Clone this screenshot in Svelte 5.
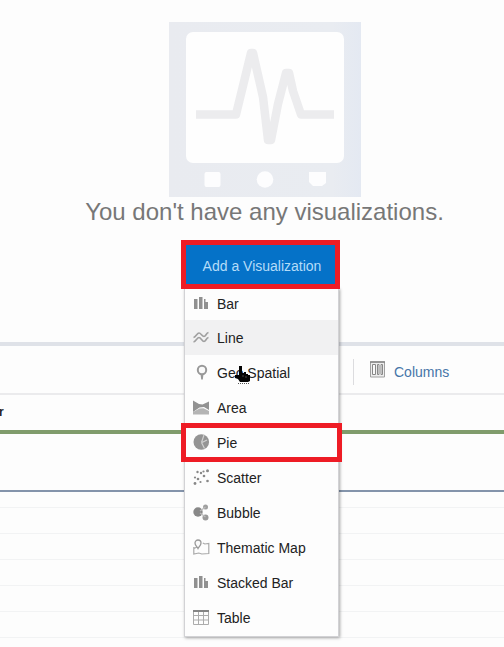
<script>
  const items = [
    { label: 'Bar', icon: 'bar' },
    { label: 'Line', icon: 'line' },
    { label: 'Geo Spatial', icon: 'pin' },
    { label: 'Area', icon: 'area' },
    { label: 'Pie', icon: 'pie' },
    { label: 'Scatter', icon: 'scatter' },
    { label: 'Bubble', icon: 'bubble' },
    { label: 'Thematic Map', icon: 'map' },
    { label: 'Stacked Bar', icon: 'bar' },
    { label: 'Table', icon: 'table' }
  ];
  const rows = [0, 1, 2, 3, 4, 5];
</script>

<div class="page">
  <section class="empty">
    <svg class="monitor" viewBox="0 0 192 175">
      <defs>
        <linearGradient id="frame" x1="0" x2="1">
          <stop offset="0" stop-color="#e9ebf0" />
          <stop offset="0.85" stop-color="#e9ecf1" />
          <stop offset="1" stop-color="#e4e9f2" />
        </linearGradient>
      </defs>
      <rect width="192" height="175" fill="url(#frame)" />
      <rect x="17" y="10" width="158" height="131" rx="7" fill="#fefefe" />
      <path d="M27 92.500H67L72 72 82 31 84 31 94 75 99 118 102 118 109 82 117 51 120 51 124 69 132 92.500H165" fill="none" stroke="#ececee" stroke-width="8.500" stroke-linejoin="round" />
      <rect x="35.500" y="150" width="16" height="15" rx="2" fill="#fdfdfe" />
      <circle cx="96" cy="157.500" r="8.300" fill="#fdfdfe" />
      <path d="M140 150h17v11l-4 3h-9l-4-4z" fill="#fdfdfe" />
    </svg>
    <h1>You don't have any visualizations.</h1>
  </section>

  <section class="grid">
    <div class="toolbar">
      <div class="columns">
        <svg width="15" height="17" viewBox="0 0 15 17">
          <path d="M.5 1h14v15H.5z" fill="#eee" stroke="#a0a0a0" />
          <path d="M0 1h15" stroke="#858585" stroke-width="1.500" />
          <path d="M2.500 3.500h3v10h-3zM7.500 3.500h1.500v10H7.500zM11 3.500h1.500v10H11z" fill="#fafafa" stroke="#888" />
        </svg>
        <span>Columns</span>
      </div>
    </div>
    <div class="header">r</div>
    <div class="first"></div>
    <div class="rows">
      {#each rows as row (row)}<div class="row"></div>{/each}
    </div>
  </section>

  <div class="dropdown">
    <button>Add a Visualization</button>
    <div class="menu">
      {#each items as item (item.label)}
        <div class="item" class:hover={item.label === 'Line'}>
          <svg width="17" height="17" viewBox="0 0 17 17">
            {#if item.icon === 'bar'}
              <path d="M1 4h3.500v10H1zM6 2h3.500v12H6zM11 4h1.500v10H11zM12.500 7h2.500v7h-2.500z" fill="#909090" />
            {:else if item.icon === 'line'}
              <path d="M.5 8.500C3 8 4 4 6 4s3 3.500 5 3.500S13 4 15.500 3.500M.5 13C3 12.500 4 8.500 6 8.500S9 12.500 11 12.500 13 9 15.500 8.500" fill="none" stroke="#a0a0a0" stroke-width="1.600" />
            {:else if item.icon === 'pin'}
              <circle cx="9" cy="6" r="4.200" fill="#fafafa" stroke="#999" stroke-width="2" />
              <path d="M7.500 10h3L9.800 15.500H8.200z" fill="#999" />
            {:else if item.icon === 'area'}
              <path d="M0 1.500 6 5 9.500 5.500 16 2.500V11L11 8 6.500 8.500 0 13z" fill="#929292" />
              <path d="M0 15.500v-2.500l6.500-3.500 4-.2L16 12v3.500z" fill="#b4b4b4" />
            {:else if item.icon === 'pie'}
              <circle cx="8.300" cy="8" r="7.800" fill="#949494" />
              <path d="M8.500 8.500 11 1M8.500 8.500 11.500 14.500M9 8.500 14 6" stroke="#d0d0d0" fill="none" stroke-width="1.200" />
            {:else if item.icon === 'scatter'}
              <g fill="#888">
                <circle cx="2" cy="14.500" r="1.400" /><circle cx="2" cy="8.500" r="1.100" />
                <circle cx="4.500" cy="3" r="1.200" /><circle cx="5" cy="10" r="1.300" />
                <circle cx="8" cy="4" r="1.200" /><circle cx="7.500" cy="13" r="1.100" />
                <circle cx="10.500" cy="2.500" r="1.100" /><circle cx="11" cy="7" r="1.300" />
                <circle cx="14.500" cy="1.700" r="1.500" /><circle cx="14.500" cy="12" r="1.300" />
              </g>
            {:else if item.icon === 'bubble'}
              <circle cx="5" cy="8" r="4.700" fill="#888" />
              <circle cx="12.500" cy="3" r="2.500" fill="#a0a0a0" />
              <circle cx="12.500" cy="13.500" r="3" fill="#999" />
              <path d="M7 7 12.500 3M7 9l5.500 4" stroke="#bbb" stroke-width="1.300" />
            {:else if item.icon === 'map'}
              <path d="M.8 8v7l5-1 3 1 7-.5V4.500l-4 .5-2-1M1 9.500l3-1.500" fill="none" stroke="#aaa" stroke-width="1.200" />
              <path d="M5 9.500C4 7.500 2 6.500 2 4a2.900 2.900 0 0 1 6 0C8 6.500 6 7.500 5 9.500z" fill="#fafafa" stroke="#999" stroke-width="1.300" />
            {:else}
              <path d="M.5 1.500h15v14H.5zM.5 6.500h15M.5 11h15M5.500 3v12.500M10.500 3v12.500" fill="none" stroke="#acacac" />
              <path d="M0 2h16" stroke="#858585" stroke-width="2" />
            {/if}
          </svg>
          <span>{item.label}</span>
        </div>
      {/each}
    </div>
  </div>

  <div class="mark button-mark"></div>
  <div class="mark pie-mark"></div>

  <svg class="cursor" width="17" height="19" viewBox="0 0 17 19">
    <path d="M4 0h3v7h2V6h2v2h2v1h2v6l-2 1H5l-2-3-3-1V9h4z" fill="#050505" />
    <path d="M8 9v2M11 10v2" stroke="#777" stroke-width=".6" />
    <path d="M3 17.500h11" stroke="#555" stroke-dasharray="1 1" />
  </svg>
</div>

<style>
  :global(body) { margin: 0; background: #fdfdfd; }
  .page {
    position: relative;
    display: flex;
    flex-direction: column;
    width: 504px;
    height: 647px;
    overflow: hidden;
    background: #fdfdfd;
    font-family: "Liberation Sans", Arial, sans-serif;
    font-size: 14px;
    color: #222;
  }
  .empty {
    box-sizing: border-box;
    height: 342px;
    padding: 22px 0 0 25px;
    display: flex;
    flex-direction: column;
    align-items: center;
  }
  .monitor { width: 192px; height: 175px; display: block; flex: none; }
  h1 {
    margin: 0;
    padding-top: 1px;
    font-weight: 400;
    font-size: 24px;
    line-height: 28px;
    color: #777;
    white-space: nowrap;
  }
  .grid { display: flex; flex-direction: column; }
  .toolbar {
    box-sizing: border-box;
    height: 53px;
    border-top: 4px solid #dfe2e8;
    border-bottom: 2px solid #ebebed;
    padding: 13px 0 0 353px;
  }
  .columns {
    display: flex;
    align-items: center;
    height: 26px;
    border-left: 1px solid #dcdcdf;
    padding-left: 16px;
    color: #4675a8;
  }
  .columns svg { margin-top: -6px; }
  .columns span { margin-left: 9px; margin-top: -1px; }
  .header {
    box-sizing: border-box;
    height: 39px;
    border-bottom: 4px solid #809c6c;
    font-weight: 700;
    font-size: 12px;
    line-height: 35px;
    text-indent: -1px;
  }
  .first { box-sizing: border-box; height: 58px; border-bottom: 2px solid #8494ab; }
  .row { box-sizing: border-box; height: 26px; border-bottom: 1px solid #f2f3f4; }
  .row:first-child { height: 16px; }
  .dropdown { position: absolute; left: 184px; top: 243px; width: 155px; }
  button {
    display: block;
    width: 153px;
    height: 45px;
    margin-left: 1px;
    padding: 0 0 0 1px;
    border: 0;
    background: #0572c8;
    color: #b4dcf8;
    font: 14px "Liberation Sans", Arial, sans-serif;
    white-space: nowrap;
  }
  .menu {
    box-sizing: border-box;
    height: 349px;
    border: 1px solid #d2d2d5;
    border-top: 0;
    background: #fdfdfd;
    box-shadow: 1px 1px 3px rgba(0, 0, 0, 0.35);
  }
  .item { display: flex; align-items: center; height: 35px; padding-left: 8px; }
  .menu .item:first-child { height: 32px; }
  .item.hover { background: #f1f1f2; }
  .item svg { flex: none; margin-top: -1px; }
  .item span { margin-left: 7px; line-height: 16px; white-space: nowrap; }
  .mark { position: absolute; box-sizing: border-box; border: 5px solid #ee1c25; }
  .button-mark { left: 181px; top: 240px; width: 159px; height: 49px; }
  .pie-mark { left: 181px; top: 423px; width: 161px; height: 39px; }
  .cursor { position: absolute; left: 235px; top: 366px; }
</style>
